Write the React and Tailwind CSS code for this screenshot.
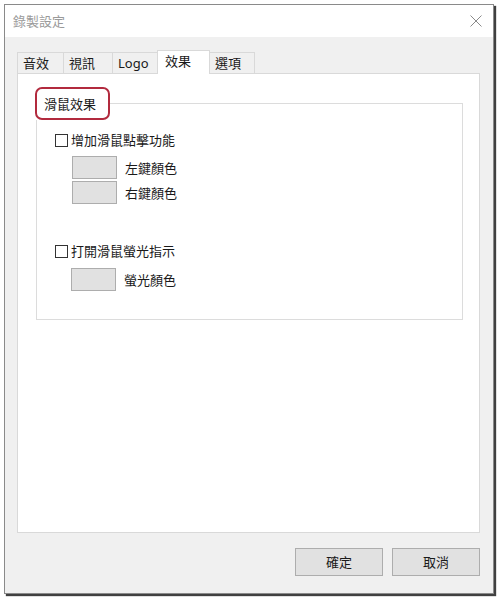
import { useState } from "react";

const tabs = [
    { name: "音效", w: "w-[47px]" },
    { name: "視訊", w: "w-[50px]" },
    { name: "Logo", w: "w-[46px]" },
    { name: "效果", w: "w-[53px]", active: true },
    { name: "選項", w: "w-[46px]" },
]

const ColorButton = ({ label }) => {
    return (
        <div className="flex items-center h-[23px] mt-[2px]">
            <button className="w-[45px] h-[23px] bg-[#e1e1e1] border border-[#adadad]"></button>
            <span className="ml-[8px]">{label}</span>
        </div>
    )
}

const CheckRow = ({ label, checked, onToggle }) => {
    return (
        <label className="flex items-center h-[16px]">
            <span onClick={onToggle} className="w-[13px] h-[13px] border border-[#333] bg-white flex items-center justify-center">
                {checked && <span className="w-[7px] h-[7px] bg-[#333]"></span>}
            </span>
            <span className="ml-[3px]">{label}</span>
        </label>
    )
}

const App = () => {
    const [clickOn, setClickOn] = useState(false)
    const [glowOn, setGlowOn] = useState(false)

    return (
        <div className="w-[499px] h-[600px] bg-white pt-[4px] pl-[4px] font-['Noto_Sans','Noto_Sans_CJK_TC',sans-serif] text-[13px] leading-[16px] text-[#1a1a1a]">
            <div className="w-[490px] h-[590px] border border-[#8a8a8a] shadow-[2px_2px_1px_rgba(0,0,0,0.75)] flex flex-col bg-[#f0f0f0]">
                <div className="h-[32px] bg-white flex items-center justify-between pl-[8px] pr-[11px] shrink-0">
                    <span className="text-[#9a9a9a] text-[13px]">錄製設定</span>
                    <svg width="12" height="12" viewBox="0 0 12 12" className="text-[#8a8a8a]">
                        <path d="M0.5 0.5 L11.5 11.5 M11.5 0.5 L0.5 11.5" stroke="currentColor" strokeWidth="1" fill="none" />
                    </svg>
                </div>

                <div className="flex-1 flex flex-col pl-[12px] pr-[13px] pt-[13px]">
                    <div className="flex items-end h-[23px]">
                        {tabs.map((t) => (
                            <div key={t.name} className={`${t.w} -mr-px border border-b-0 border-[#d9d9d9] pl-[5px] ${t.active ? "h-[24px] bg-white relative z-10 -mb-px pt-[2px] pl-[7px]" : "h-[21px] bg-[#f0f0f0] pt-[2px]"}`}>
                                {t.name}
                            </div>
                        ))}
                    </div>

                    <div className="h-[460px] bg-white border border-[#d9d9d9] pt-[13px] pl-[18px] pr-[16px]">
                        <fieldset className="relative h-[233px] border border-[#dcdcdc] pl-[18px] pr-[16px]">
                            <legend className="-ml-[20px] h-[33px] w-[75px] border-2 border-[#b22a3e] rounded-[7px] pl-[7px] pt-[7px] text-[#1a1a1a] bg-white">
                                滑鼠效果
                            </legend>
                            <div className="pt-[12px]">
                                <CheckRow label="增加滑鼠點擊功能" checked={clickOn} onToggle={() => setClickOn(!clickOn)} />
                                <div className="pl-[17px] pt-[6px]">
                                    <ColorButton label="左鍵顏色" />
                                    <ColorButton label="右鍵顏色" />
                                </div>
                                <div className="pt-[39px]">
                                    <CheckRow label="打開滑鼠螢光指示" checked={glowOn} onToggle={() => setGlowOn(!glowOn)} />
                                </div>
                                <div className="pl-[16px] pt-[7px]">
                                    <ColorButton label="螢光顏色" />
                                </div>
                            </div>
                        </fieldset>
                    </div>

                    <div className="flex justify-end gap-[9px] pt-[15px]">
                        <button className="w-[88px] h-[28px] bg-[#e1e1e1] border border-[#adadad]">確定</button>
                        <button className="w-[88px] h-[28px] bg-[#e1e1e1] border border-[#adadad]">取消</button>
                    </div>
                </div>
            </div>
        </div>
    )
}

export default App;
